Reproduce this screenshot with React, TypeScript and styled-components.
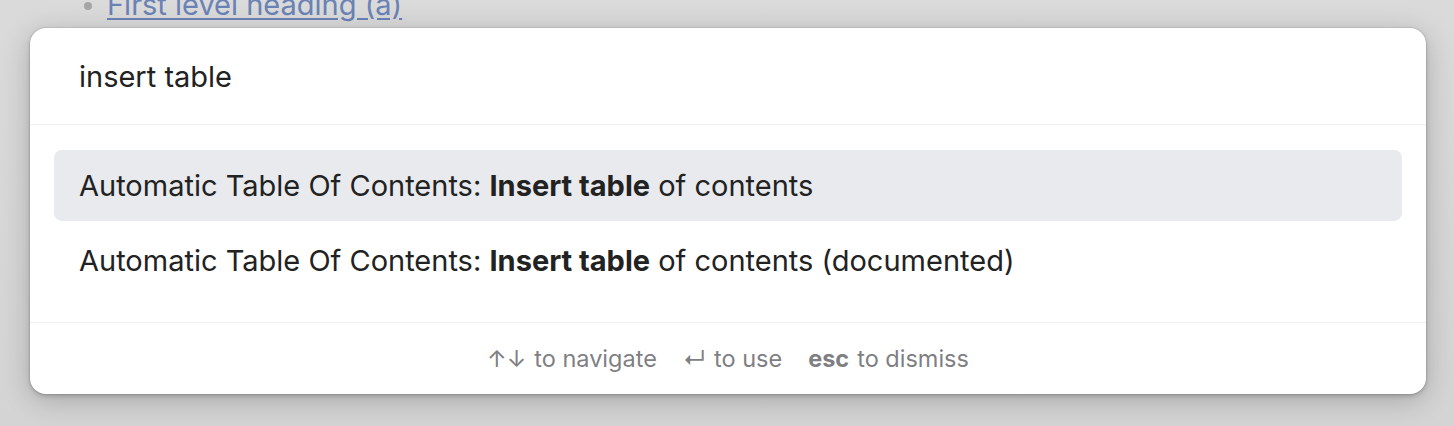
import React from "react";
import styled, { createGlobalStyle } from "styled-components";

const Global = createGlobalStyle`
  html, body { margin: 0; padding: 0; }
  body {
    width: 1454px;
    height: 426px;
    overflow: hidden;
    background: #d6d6d6;
    font-family: Inter, "Noto Sans", sans-serif;
  }
`;

const Page = styled.div`
  position: relative;
  width: 1454px;
  height: 426px;
  background: linear-gradient(180deg, #dadada 0%, #d4d4d4 100%);
  overflow: hidden;
`;

const Doc = styled.ul`
  margin: -14px 0 0 0;
  padding: 0 0 0 107px;
  list-style: none;
`;

const DocItem = styled.li`
  position: relative;
  font-size: 29px;
  line-height: 38px;
  &::before {
    content: "";
    position: absolute;
    left: -23px;
    top: 16px;
    width: 8px;
    height: 8px;
    border-radius: 50%;
    background: #a6a6a6;
  }
`;

const DocLink = styled.a`
  color: #6a82b5;
  text-decoration: underline;
  text-underline-offset: 3px;
`;

const Modal = styled.div`
  position: absolute;
  left: 30px;
  top: 28px;
  width: 1396px;
  height: 366px;
  background: #fff;
  border-radius: 16px;
  box-shadow: 0 0 0 1px rgba(0, 0, 0, 0.06), 0 2px 4px rgba(0, 0, 0, 0.18),
    0 6px 28px rgba(0, 0, 0, 0.22);
  display: flex;
  flex-direction: column;
  overflow: hidden;
`;

const InputRow = styled.div`
  height: 96px;
  display: flex;
  align-items: center;
  padding: 0 49px;
  border-bottom: 1px solid #f0f0f0;
  font-size: 29px;
  color: #222;
`;

const Results = styled.div`
  flex: 1;
  padding: 25px 24px 0;
  display: flex;
  flex-direction: column;
  gap: 4px;
  border-bottom: 1px solid #f0f0f0;
`;

const Suggestion = styled.div<{ $active?: boolean }>`
  height: 71px;
  display: flex;
  align-items: center;
  padding: 0 25px;
  border-radius: 8px;
  font-size: 29px;
  color: #222;
  background: ${(p) => (p.$active ? "#e8eaed" : "transparent")};
  white-space: pre;
`;

const Strong = styled.b`
  font-weight: 700;
`;

const Footer = styled.div`
  height: 71px;
  display: flex;
  align-items: center;
  justify-content: center;
  gap: 26px;
  font-size: 23.5px;
  color: #7f7f83;
`;

const Hint = styled.span`
  display: inline-flex;
  align-items: center;
  gap: 8px;
`;

const Key = styled.span<{ $bold?: boolean }>`
  font-weight: ${(p) => (p.$bold ? 700 : 400)};
`;

export default function App() {
  return (
    <>
      <Global />
      <Page>
        <Doc>
          <DocItem>
            <DocLink href="#">First level heading (a)</DocLink>
          </DocItem>
        </Doc>
        <Modal>
          <InputRow>insert table</InputRow>
          <Results>
            <Suggestion $active>
              Automatic Table Of Contents: <Strong>Insert table</Strong> of contents
            </Suggestion>
            <Suggestion>
              Automatic Table Of Contents: <Strong>Insert table</Strong> of contents (documented)
            </Suggestion>
          </Results>
          <Footer>
            <Hint>
              <Key>↑↓</Key> to navigate
            </Hint>
            <Hint>
              <Key>↵</Key> to use
            </Hint>
            <Hint>
              <Key $bold>esc</Key> to dismiss
            </Hint>
          </Footer>
        </Modal>
      </Page>
    </>
  );
}
